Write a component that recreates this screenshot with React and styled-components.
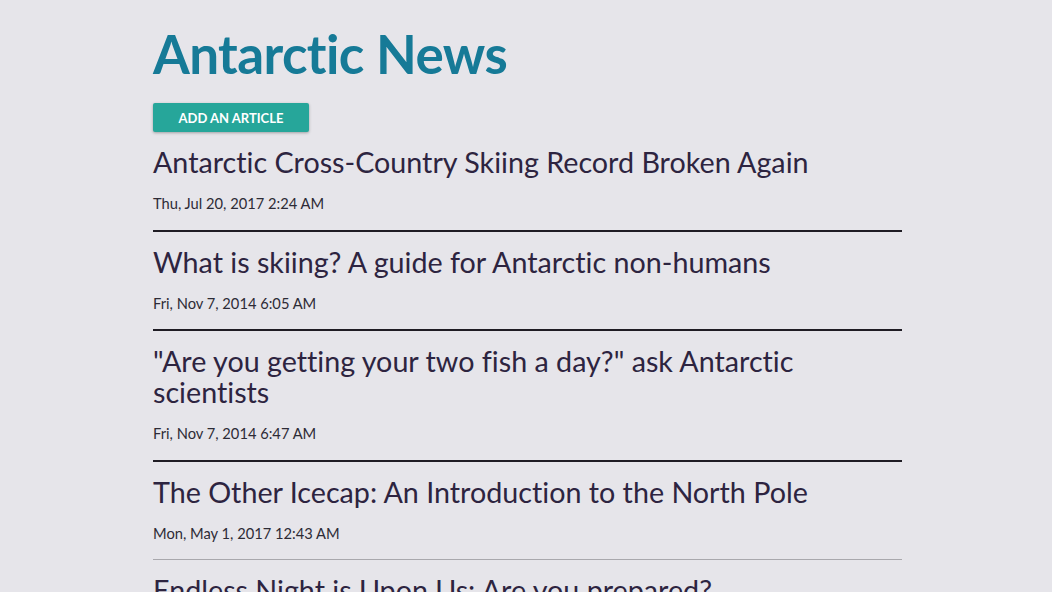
import styled, { createGlobalStyle } from "styled-components";

const GlobalStyle = createGlobalStyle`
  html, body {
    margin: 0;
    padding: 0;
    background: #e6e5ea;
    font-family: Lato, "Open Sans", sans-serif;
    font-variant-ligatures: none;
  }
`;

const Page = styled.div`
  width: 749px;
  margin-left: calc(50% - 373px);
`;

const Title = styled.h1`
  margin: 0;
  padding-top: 22px;
  font-size: 53px;
  line-height: 64px;
  font-weight: 700;
  color: #167a97;
  letter-spacing: -0.6px;
`;

const AddButton = styled.button`
  margin-top: 17px;
  width: 156px;
  height: 29px;
  border: none;
  border-radius: 2px;
  background: #26a69a;
  color: #fff;
  font-family: Lato, sans-serif;
  font-weight: 700;
  font-size: 13px;
  text-transform: uppercase;
  box-shadow: 0 1px 3px rgba(0, 0, 0, 0.3);
  cursor: pointer;
`;

const List = styled.div`
  display: flex;
  flex-direction: column;
`;

const Article = styled.div`
  padding: 15px 0 16.6px;
  border-bottom: ${(p) => (p.faint ? "1.5px solid #a9a8ad" : "2px solid #1f1c24")};
`;

const Headline = styled.h2`
  margin: 0 0 15px;
  font-size: 28.7px;
  line-height: 31px;
  font-weight: 400;
  color: #2d2440;
`;

const Stamp = styled.div`
  font-size: 14.7px;
  line-height: 20px;
  color: #2d2b36;
`;

const articles = [
  { title: "Antarctic Cross-Country Skiing Record Broken Again", date: "Thu, Jul 20, 2017 2:24 AM" },
  { title: "What is skiing? A guide for Antarctic non-humans", date: "Fri, Nov 7, 2014 6:05 AM" },
  { title: "\"Are you getting your two fish a day?\" ask Antarctic scientists", date: "Fri, Nov 7, 2014 6:47 AM" },
  { title: "The Other Icecap: An Introduction to the North Pole", date: "Mon, May 1, 2017 12:43 AM", faint: true },
  { title: "Endless Night is Upon Us: Are you prepared?", date: "Tue, Jun 20, 2017 9:12 PM" },
];

const App = () => {
  return (
    <>
      <GlobalStyle />
      <Page>
        <Title>Antarctic News</Title>
        <AddButton>Add an Article</AddButton>
        <List>
          {articles.map((a) => (
            <Article key={a.title} faint={a.faint}>
              <Headline>{a.title}</Headline>
              <Stamp>{a.date}</Stamp>
            </Article>
          ))}
        </List>
      </Page>
    </>
  );
};

export default App;
